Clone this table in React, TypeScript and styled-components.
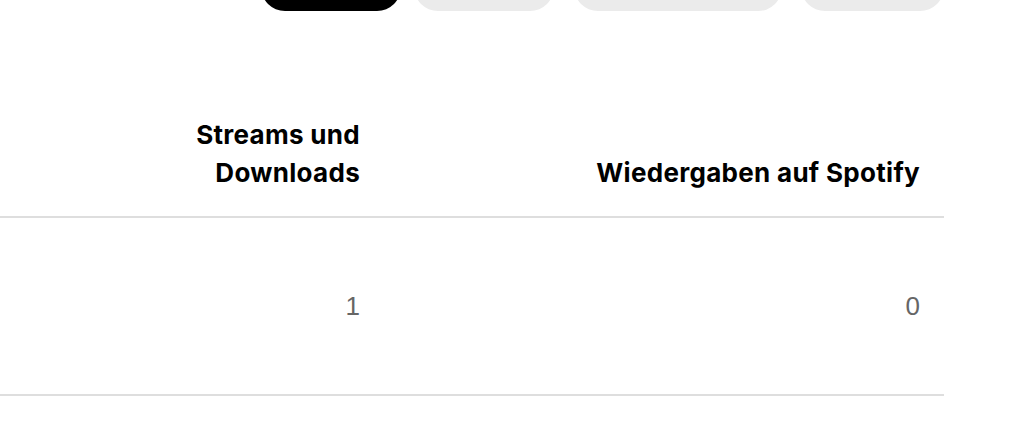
import React from "react";
import styled, { createGlobalStyle } from "styled-components";

const GlobalStyle = createGlobalStyle`
  html, body { margin: 0; padding: 0; background: #ffffff; }
  body { font-family: "Inter", "Liberation Sans", sans-serif; color: #000; }
`;

const Page = styled.div`
  width: 944px;
  overflow: hidden;
`;

const ChipRow = styled.div`
  display: flex;
  justify-content: flex-end;
  margin-top: -37px;
`;

const Chip = styled.button<{ $active?: boolean; $w: number; $gap: number }>`
  flex: none;
  width: ${(p) => p.$w}px;
  height: 48px;
  margin-left: ${(p) => p.$gap}px;
  border: none;
  border-radius: 24px;
  background: ${(p) => (p.$active ? "#000000" : "#ebebeb")};
  color: ${(p) => (p.$active ? "#ffffff" : "#000000")};
  font: 700 14px "Inter", sans-serif;
  padding: 0;
`;

const Table = styled.div`
  margin-top: 81px;
  display: grid;
  grid-template-columns: 384px 560px;
`;

const HeadCell = styled.div`
  display: flex;
  align-items: flex-end;
  justify-content: flex-end;
  text-align: right;
  padding: 24px 24px 24px 0;
  font-family: "Inter", "Liberation Sans", sans-serif;
  font-weight: 700;
  font-size: 26px;
  line-height: 38px;
  letter-spacing: 0.3px;
  border-bottom: 2px solid #dedede;
`;

const HeadText = styled.span<{ $w?: number }>`
  display: block;
  max-width: ${(p) => (p.$w ? `${p.$w}px` : "none")};
`;

const Cell = styled.div`
  height: 176px;
  display: flex;
  align-items: center;
  justify-content: flex-end;
  padding-right: 24px;
  font-family: "Liberation Sans", Arial, sans-serif;
  font-size: 26px;
  color: #666666;
  border-bottom: 2px solid #dedede;
`;

const chips = [
  { w: 140, gap: 0, active: true },
  { w: 140, gap: 13, active: false },
  { w: 208, gap: 20, active: false },
  { w: 143, gap: 19, active: false },
];

export default function App() {
  return (
    <>
      <GlobalStyle />
      <Page>
        <ChipRow>
          {chips.map((c, i) => (
            <Chip key={i} $active={c.active} $w={c.w} $gap={c.gap} />
          ))}
        </ChipRow>
        <Table>
          <HeadCell>
            <HeadText $w={185}>Streams und Downloads</HeadText>
          </HeadCell>
          <HeadCell>
            <HeadText>Wiedergaben auf Spotify</HeadText>
          </HeadCell>
          <Cell>1</Cell>
          <Cell>0</Cell>
        </Table>
      </Page>
    </>
  );
}
